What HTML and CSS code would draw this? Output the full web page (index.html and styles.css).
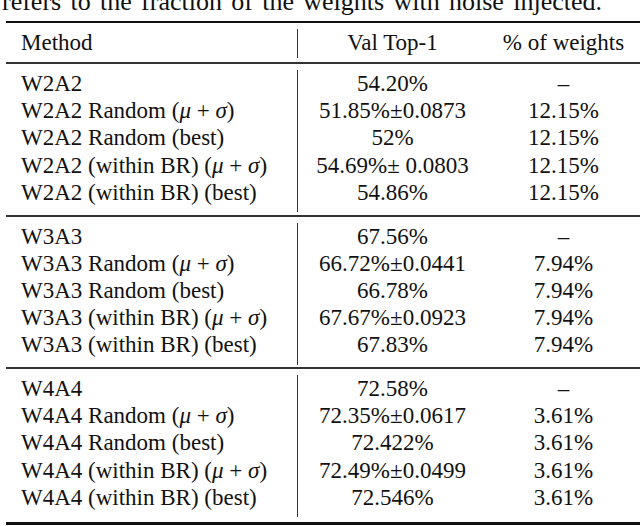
FILE: index.html
```html
<!DOCTYPE html>
<html>
<head>
<meta charset="utf-8">
<link rel="stylesheet" href="styles.css">
</head>
<body>
<p class="caption">refers to the fraction of the weights with noise injected.</p>
<div class="table">
  <div class="grid head">
    <div class="c1">Method</div><div class="c2">Val Top-1</div><div class="c3">% of weights</div>
  </div>
  <div class="grid grp">
    <div class="c1">W2A2</div><div class="c2">54.20%</div><div class="c3">–</div>
    <div class="c1">W2A2 Random (<i>μ</i> + <i>σ</i>)</div><div class="c2">51.85%±0.0873</div><div class="c3">12.15%</div>
    <div class="c1">W2A2 Random (best)</div><div class="c2">52%</div><div class="c3">12.15%</div>
    <div class="c1">W2A2 (within BR) (<i>μ</i> + <i>σ</i>)</div><div class="c2">54.69%± 0.0803</div><div class="c3">12.15%</div>
    <div class="c1">W2A2 (within BR) (best)</div><div class="c2">54.86%</div><div class="c3">12.15%</div>
  </div>
  <div class="grid grp">
    <div class="c1">W3A3</div><div class="c2">67.56%</div><div class="c3">–</div>
    <div class="c1">W3A3 Random (<i>μ</i> + <i>σ</i>)</div><div class="c2">66.72%±0.0441</div><div class="c3">7.94%</div>
    <div class="c1">W3A3 Random (best)</div><div class="c2">66.78%</div><div class="c3">7.94%</div>
    <div class="c1">W3A3 (within BR) (<i>μ</i> + <i>σ</i>)</div><div class="c2">67.67%±0.0923</div><div class="c3">7.94%</div>
    <div class="c1">W3A3 (within BR) (best)</div><div class="c2">67.83%</div><div class="c3">7.94%</div>
  </div>
  <div class="grid grp last">
    <div class="c1">W4A4</div><div class="c2">72.58%</div><div class="c3">–</div>
    <div class="c1">W4A4 Random (<i>μ</i> + <i>σ</i>)</div><div class="c2">72.35%±0.0617</div><div class="c3">3.61%</div>
    <div class="c1">W4A4 Random (best)</div><div class="c2">72.422%</div><div class="c3">3.61%</div>
    <div class="c1">W4A4 (within BR) (<i>μ</i> + <i>σ</i>)</div><div class="c2">72.49%±0.0499</div><div class="c3">3.61%</div>
    <div class="c1">W4A4 (within BR) (best)</div><div class="c2">72.546%</div><div class="c3">3.61%</div>
  </div>
</div>
</body>
</html>
```

FILE: styles.css
```css
* {
  box-sizing: border-box;
}

html, body {
  margin: 0;
  padding: 0;
  background: #fff;
}

body {
  width: 640px;
  height: 526px;
  overflow: hidden;
  font-family: "Liberation Serif", "Times New Roman", serif;
  color: #111;
}

.caption {
  margin: -11px 0 0 2px;
  width: 600px;
  font-size: 26px;
  line-height: 26px;
  text-align: justify;
  text-align-last: justify;
}

.table {
  margin: 6px 0 0 6px;
  width: 634px;
  border-top: 2px solid #111;
  border-bottom: 3px solid #111;
  font-size: 23px;
  line-height: 27.2px;
}

.grid {
  display: grid;
  grid-template-columns: 292px 189px 153px;
}

.head {
  padding: 5.6px 0 4.2px;
  border-bottom: 2px solid #333;
}

.head > div {
  padding-bottom: 2px;
}

.grp {
  padding: 6px 0 2.5px;
  border-bottom: 2px solid #333;
}

.grp.last {
  padding-bottom: 5px;
  border-bottom: none;
}

.grp > div:nth-last-child(-n+3) {
  padding-bottom: 6px;
}

.c1 {
  padding-left: 15px;
  border-right: 1px solid #333;
  white-space: nowrap;
}

.c2, .c3 {
  text-align: center;
  white-space: nowrap;
}

i {
  font-style: italic;
}
```
